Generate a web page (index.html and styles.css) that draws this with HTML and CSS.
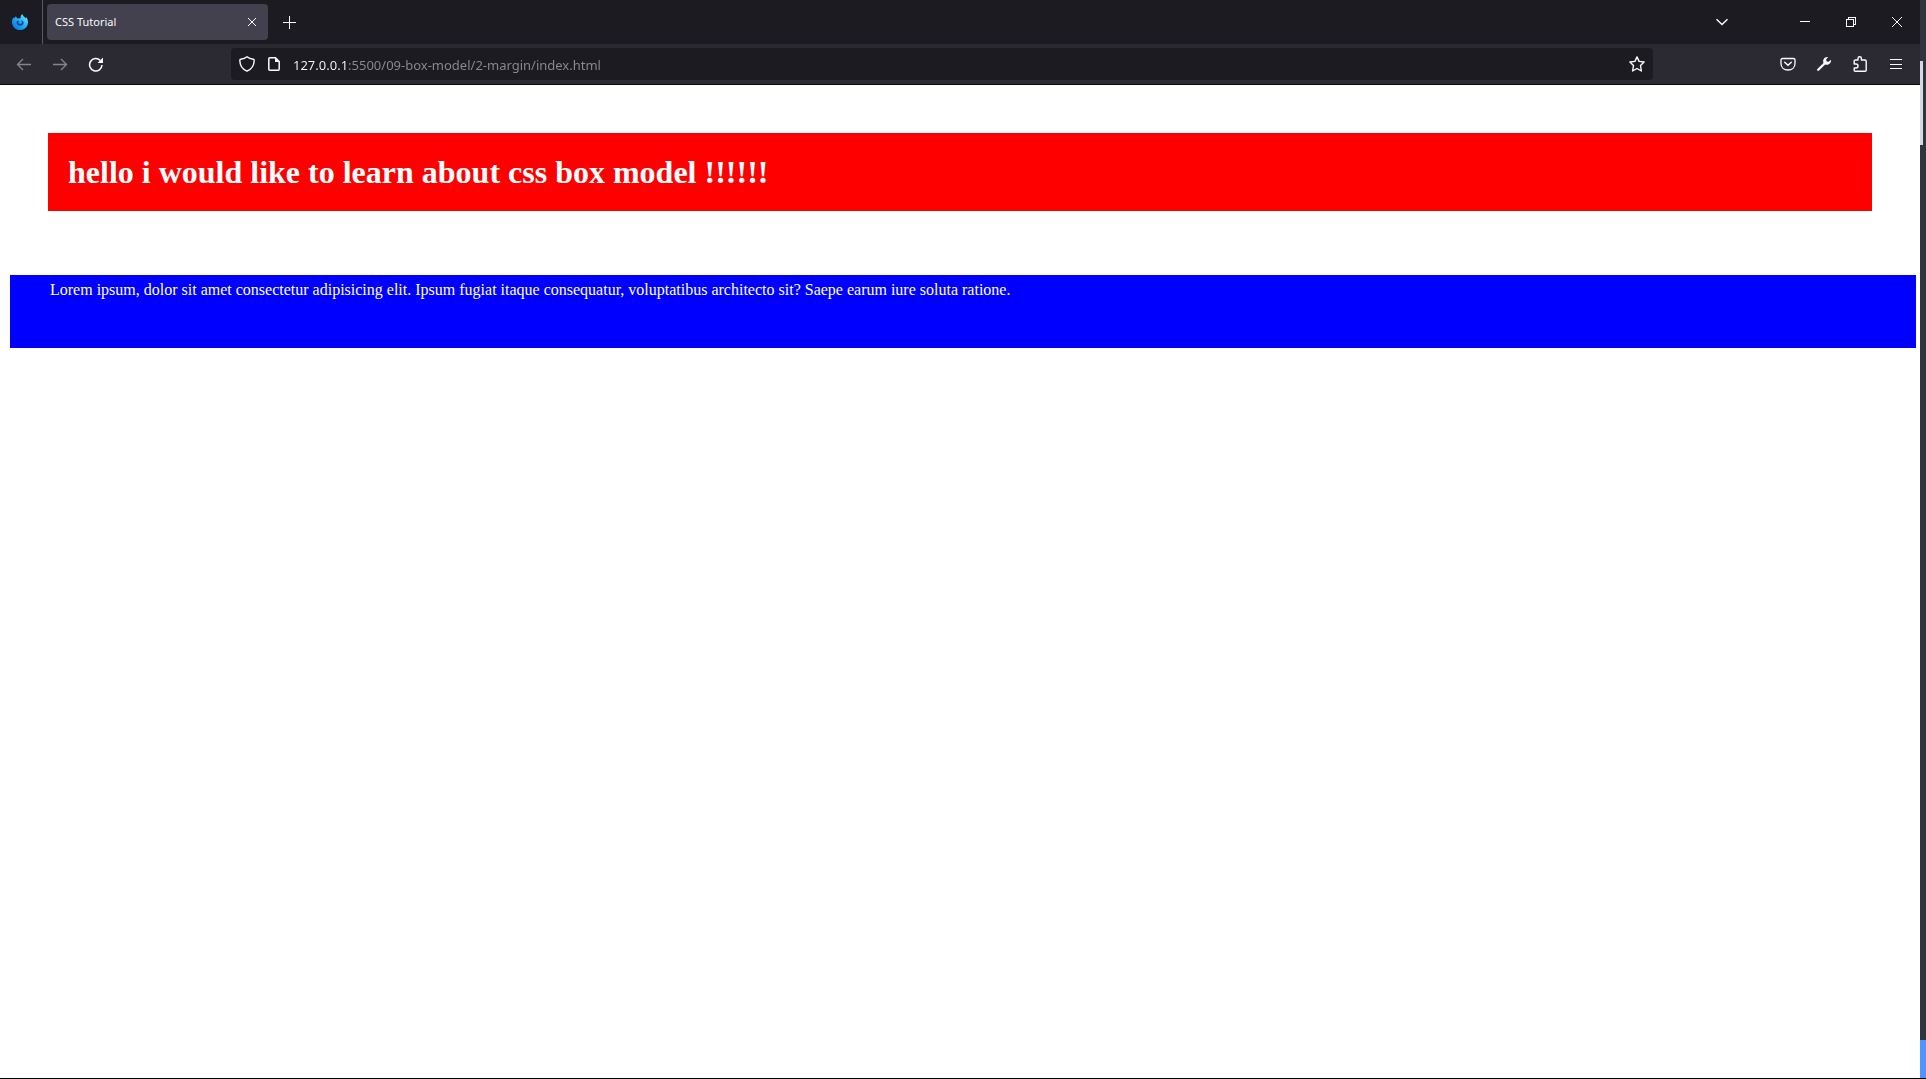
FILE: index.html
```html
<!DOCTYPE html>
<html lang="en">
<head>
<meta charset="utf-8">
<title>CSS Tutorial</title>
<link rel="stylesheet" href="styles.css">
</head>
<body>
<div class="desktop">
  <div class="window">
    <header class="tabs">
      <button class="view" aria-label="Firefox View">
        <svg width="16" height="16" viewBox="0 0 16 16">
          <defs><linearGradient id="flame" x1="1" y1="0" x2="0" y2="1"><stop offset="0" stop-color="#7df4ff"/><stop offset=".45" stop-color="#20b4fa"/><stop offset="1" stop-color="#0868d8"/></linearGradient></defs>
          <path class="flame" fill="url(#flame)" d="M10.300 0C8.800 1.200 8.400 2.600 8.600 4 7.600 4.300 7 4.400 6 4.600 4.900 4 4.200 3.200 4 2.200 3.200 2.700 2.700 3.400 2.400 4.300L1.400 3.600C.4 5 0 6.500 0 8.200 0 12.600 3.500 16 8 16s8-3.400 8-7.800c0-2.200-.8-3.900-2-5.200l-.1 1.200C12.400 3.200 10.900 1.800 10.300 0z"/>
          <path class="flame" fill="#23439f" d="M4.800 6.800c1 .3 2 .3 3 .2-.3.8-1.300 1-1.800 1.600.8 1.400 2.800 1.500 3.600.6.600-1 .2-2.200-.8-2.900 1.900.1 3 1.500 2.800 3-.3 1.600-1.800 2.600-3.500 2.500C6 11.600 4.500 10.200 4.500 8.400z"/>
        </svg>
      </button>
      <div class="tab">
        <span class="tab-title">CSS Tutorial</span>
        <button class="tab-close" aria-label="Close tab"><svg width="8" height="8" viewBox="0 0 8 8"><path d="M0 0l8 8M8 0L0 8"/></svg></button>
      </div>
      <button class="new-tab" aria-label="New tab"><svg width="13" height="13" viewBox="0 0 13 13" shape-rendering="crispEdges"><path d="M6.500 0v13M0 6.500h13"/></svg></button>
      <div class="controls">
        <button class="list-tabs" aria-label="List all tabs"><svg width="12" height="8" viewBox="0 0 12 8"><path stroke-width="1.400" d="M.5 1.200L6 6.500l5.500-5.300"/></svg></button>
        <button class="caption" aria-label="Minimize"><svg width="10" height="10" viewBox="0 0 10 10" shape-rendering="crispEdges"><path d="M0 4.500h10"/></svg></button>
        <button class="caption" aria-label="Restore"><svg width="10" height="10" viewBox="0 0 10 10" shape-rendering="crispEdges"><path d="M.5 2.500h7v7h-7zM2.500 2.500v-2h7v7h-2"/></svg></button>
        <button class="caption" aria-label="Close"><svg width="10" height="10" viewBox="0 0 10 10"><path d="M0 0l10 10M10 0L0 10"/></svg></button>
      </div>
    </header>
    <nav class="toolbar">
      <div class="history">
        <button aria-label="Back" disabled><svg width="16" height="16" viewBox="0 0 16 16"><path stroke-width="1.300" d="M15 8.500H2M7 3L1.500 8.500 7 14"/></svg></button>
        <button aria-label="Forward" disabled><svg width="16" height="16" viewBox="0 0 16 16"><path stroke-width="1.300" d="M1 8.500h13M9 3l5.500 5.500L9 14"/></svg></button>
        <button aria-label="Reload"><svg width="16" height="16" viewBox="0 0 16 16"><path stroke-width="1.500" d="M14 9A6.200 6.200 0 1 1 12.300 4.500"/><path fill="currentColor" stroke="none" d="M15 1.500v5.400h-5.400z"/></svg></button>
      </div>
      <div class="address">
        <svg width="16" height="16" viewBox="0 0 16 16"><path stroke-width="1.400" stroke-linejoin="round" d="M8 .8C6.500 2 4 2.900 1.700 3.200 1 3.300.8 3.800.8 4.500c.1 5 2.500 8.700 7.200 10.700 4.700-2 7.100-5.700 7.200-10.700 0-.7-.2-1.200-.9-1.300C12 2.900 9.500 2 8 .8z"/></svg>
        <svg width="12" height="14" viewBox="0 0 12 14"><path stroke-width="1.500" stroke-linejoin="round" d="M1.800.8h5.700l3.700 3.700v7.700c0 .6-.4 1-1 1H1.800c-.6 0-1-.4-1-1V1.800c0-.6.4-1 1-1z"/><path fill="currentColor" stroke="none" d="M7 .5v4.500h4.500z"/></svg>
        <input class="url" type="text" aria-label="Address" value="127.0.0.1:5500/09-box-model/2-margin/index.html">
        <button aria-label="Bookmark this page"><svg width="16" height="16" viewBox="0 0 16 16"><path stroke-width="1.400" stroke-linejoin="round" d="M8 .9l2.100 4.500 5 .6-3.600 3.500.9 5.500L8 12.500 3.600 15l.9-5.500L.9 6l5-.6z"/></svg></button>
      </div>
      <div class="actions">
        <button aria-label="Save to Pocket"><svg width="16" height="16" viewBox="0 0 16 16"><path stroke-width="1.300" d="M2.500 2.500h11c.9 0 1.500.6 1.500 1.500v3.500c0 4-3 6.500-7 6.500s-7-2.500-7-6.500V4c0-.9.600-1.500 1.500-1.500z"/><path stroke-width="1.400" stroke-linecap="round" d="M4.700 6.200L8 9.300l3.300-3.100"/></svg></button>
        <button aria-label="Developer tools"><svg width="16" height="16" viewBox="0 0 16 16"><path fill="currentColor" stroke="none" d="M12.200 1.100L10.200 3.300l.3 2.200 2.200.3 2.200-2c.5 2.600-1.300 5-4 5-.7 0-1.200-.1-1.700-.3L3 14.500c-1.200 1.100-2.600-.3-1.600-1.500L7.500 6.900C6.100 3.700 8.800.3 12.200 1.100z"/></svg></button>
        <button aria-label="Extensions"><svg width="16" height="16" viewBox="0 0 16 16"><path stroke-width="1.400" stroke-linejoin="round" d="M2.200 5.200c0-.7.500-1.200 1.200-1.200H6V2.500a1.700 1.700 0 0 1 3.400 0V4H13c.7 0 1.200.5 1.200 1.200v9c0 .6-.4 1-1 1H3.200c-.6 0-1-.4-1-1V12H4a2 2 0 0 0 0-4H2.200z"/></svg></button>
        <button aria-label="Menu"><svg width="12" height="12" viewBox="0 0 12 12" shape-rendering="crispEdges"><path d="M0 1.500h12M0 6.500h12M0 10.500h12"/></svg></button>
      </div>
    </nav>
    <main class="page">
      <h1 class="heading">hello i would like to learn about css box model !!!!!!</h1>
      <p class="text">Lorem ipsum, dolor sit amet consectetur adipisicing elit. Ipsum fugiat itaque consequatur, voluptatibus architecto sit? Saepe earum iure soluta ratione.</p>
    </main>
  </div>
  <div class="side"><div class="thumb"></div><div class="corner"></div></div>
</div>
</body>
</html>
```
FILE: styles.css
```css
* { box-sizing: border-box; }

body {
  margin: 0;
  background: #fff;
  font-family: "Noto Sans", "Open Sans", sans-serif;
}

.desktop {
  display: flex;
  min-height: 100vh;
  border-bottom: 1px solid #000;
}

.window {
  flex: 1;
  min-width: 0;
}

button {
  display: flex;
  flex: none;
  align-items: center;
  justify-content: center;
  padding: 0;
  border: 0;
  background: none;
  color: inherit;
}

svg {
  display: block;
  flex: none;
  fill: none;
  stroke: currentColor;
}

.flame {
  stroke: none;
}

.tabs {
  display: flex;
  align-items: center;
  height: 44px;
  background: #1c1b22;
  color: #fbfbfe;
}

.view {
  width: 43px;
  height: 44px;
  padding-right: 2px;
  border-right: 1px solid #5a5960;
}

.tab {
  display: flex;
  align-items: center;
  justify-content: space-between;
  width: 221px;
  height: 36px;
  margin-left: 4px;
  padding: 0 4px 0 8px;
  border-radius: 4px;
  background: #42414d;
}

.tab-title {
  font-size: 11px;
  line-height: 16px;
}

.tab-close {
  width: 24px;
  height: 24px;
}

.new-tab {
  width: 31px;
  height: 31px;
  margin-left: 6px;
}

.controls {
  display: flex;
  margin-left: auto;
}

.list-tabs {
  width: 36px;
  height: 44px;
  margin-right: 42px;
}

.caption {
  width: 46px;
  height: 44px;
}

.toolbar {
  display: flex;
  align-items: center;
  height: 41px;
  border-bottom: 1px solid #0c0c0d;
  background: #2b2a33;
  color: #fbfbfe;
}

.history {
  display: flex;
  flex: none;
  gap: 4px;
  width: 231px;
  padding-left: 8px;
}

.history button,
.actions button {
  width: 32px;
  height: 32px;
}

.history button:disabled {
  color: #85848b;
}

.address {
  display: flex;
  flex: 1;
  align-items: center;
  gap: 13px;
  max-width: 1422px;
  height: 32px;
  padding: 0 8px;
  border-radius: 4px;
  background: #1c1b22;
}

/* The host is bright and the rest of the address is dimmed. */
.url {
  flex: 1;
  min-width: 0;
  height: 26px;
  padding: 2px 0 0;
  border: 0;
  outline: 0;
  background: linear-gradient(90deg, #fbfbfe 54px, #8b8b90 54px);
  background-clip: text;
  color: transparent;
  font: 13px/24px "Noto Sans", "Open Sans", sans-serif;
}

.actions {
  display: flex;
  gap: 4px;
  margin-left: auto;
  padding-right: 8px;
}

.page {
  display: flex;
  flex-direction: column;
  gap: 64px;
  padding: 48px 4px 48px 10px;
  color: #fff;
  font-family: "Liberation Serif", "Times New Roman", serif;
}

.heading {
  margin: 0 44px 0 38px;
  padding: 20px;
  background: #f00;
  font-size: 32px;
  line-height: 38px;
}

.text {
  margin: 0;
  padding: 6px 40px 49px;
  background: #00f;
  font-size: 16px;
  line-height: 18px;
}

.side {
  display: flex;
  flex-direction: column;
  width: 6px;
  padding-top: 61px;
  background: #2f343f;
}

.thumb {
  width: 3px;
  height: 84px;
  background: #d3dae3;
}

.corner {
  height: 38px;
  margin-top: auto;
  background: #5294ff;
}
```
